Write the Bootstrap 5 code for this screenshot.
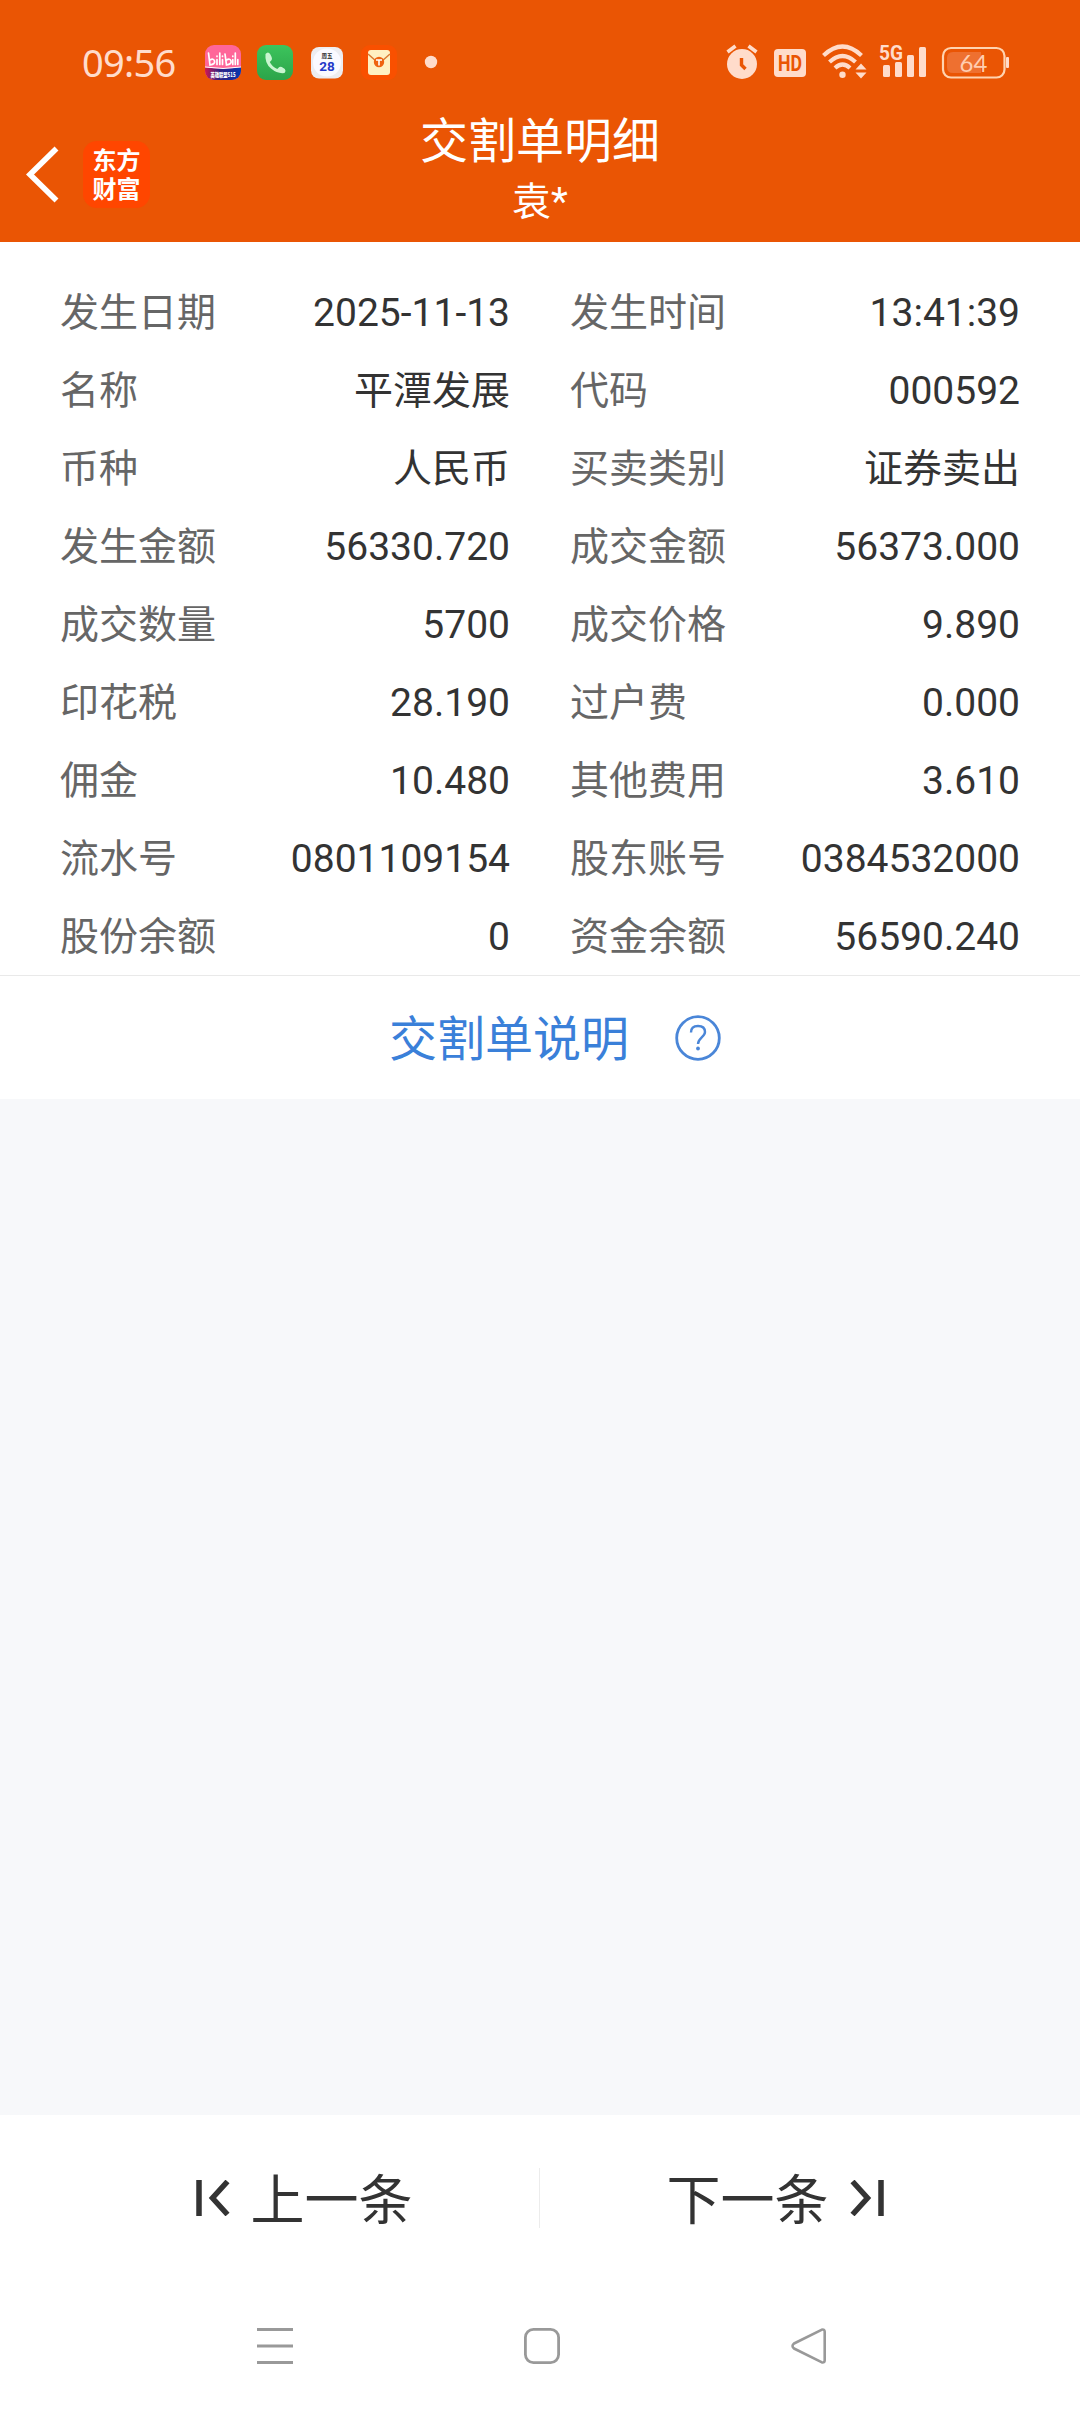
<!DOCTYPE html>
<html lang="zh-CN">
<head>
<meta charset="utf-8">
<meta name="viewport" content="width=device-width, initial-scale=1">
<title>交割单明细</title>
<link href="https://cdn.jsdelivr.net/npm/bootstrap@5.3.0/dist/css/bootstrap.min.css" rel="stylesheet">
<style>
body{font-family:Roboto,"Noto Sans CJK SC",sans-serif;color:#333;background:#f7f8fa;height:2412px;overflow:hidden}
.app-head{background:#ea5504;height:242px;color:#fff}
.status-bar{height:100px;padding:24px 71px 0 82px;color:#ffdccb}
.status-bar svg{display:block}
.clock{font:400 38px/76px "Noto Sans",sans-serif;width:123px;letter-spacing:-.7px}
.title-bar{display:grid;grid-template-columns:300px 1fr 300px;height:142px}
.title-left{padding:41px 0 0 26px;gap:24px}
.logo-tile{width:67px;height:67px;border-radius:14px;background:#ff4600;font:700 24px/29px "Noto Sans CJK SC",sans-serif;padding-top:3px}
.logo-tile span{display:block;height:29px}
.page-title{font-size:48px;line-height:60px;margin-top:12px}
.owner{font-size:39px;line-height:48px;margin-top:6px}
.detail-grid{display:grid;grid-template-columns:1fr 1fr;column-gap:60px;padding:32px 60px 0;height:733px;font-size:39px;grid-auto-rows:78px}
.detail-grid dt{font-weight:400;color:#666}
.explain{height:124px;border-top:1px solid #e9e9e9;color:#3a80d9;font-size:48px;padding-left:30px;gap:46px}
.explain span{padding-top:4px}
.pager{height:173px;font-size:54px}
.pager-item{gap:21px;width:539px}
.pager-item svg{margin-bottom:8px}
.pager-prev{padding-left:69px}
.pager-next{padding-right:69px}
.pager-rule{width:1px;height:60px;background:#ececec;margin-bottom:8px}
.sys-nav{height:124px;padding:40px 253px 0 257px}
</style>
</head>
<body class="d-flex flex-column">
<header class="app-head flex-shrink-0">
  <div class="status-bar d-flex align-items-start justify-content-between">
    <div class="d-flex">
      <span class="clock">09:56</span>
      <svg width="240" height="76" viewBox="205 24 240 76">
        <defs>
          <clipPath id="tile"><rect x="205" y="45" width="36" height="35" rx="9"/></clipPath>
          <linearGradient id="green" x2="0" y2="1"><stop stop-color="#3cc45c"/><stop offset="1" stop-color="#2ca44a"/></linearGradient>
          <linearGradient id="navy"><stop stop-color="#d01850"/><stop offset=".4" stop-color="#302080"/><stop offset="1" stop-color="#0838b0"/></linearGradient>
        </defs>
        <g clip-path="url(#tile)"><rect x="205" y="45" width="36" height="36" fill="#ff6699"/><path d="M205 67q18 3 36 0v14h-36z" fill="url(#navy)"/><path d="M205 67q18 3 36 0" stroke="#fff" fill="none"/></g>
        <g stroke="#fff" stroke-width="1.700" fill="none" stroke-linecap="round"><path d="M208.500 53l1.500 12q5.500-1 4.500-4t-4.500-1M217 59.500v5M217 56v.5M219.800 53v11.500M222.500 59.500v5M222.500 56v.5M225 54l1.500 11q5.500-1 4.500-4t-4.500-1M232.800 59.500v5M232.800 56v.5M235.300 53v11.500M237.800 59.500v5"/></g>
        <text x="223" y="76.500" text-anchor="middle" font-family="Noto Sans CJK SC" font-weight="900" font-size="6" textLength="25" lengthAdjust="spacingAndGlyphs" fill="#fff">英雄联盟S15</text>
        <rect x="257" y="45" width="36" height="35" rx="9" fill="url(#green)"/>
        <path d="M265.500 54q-1 9 5.500 14.500t13.500 4.500q2-2 .3-4l-3-2q-2-1-3.500 1l-1 1q-5-2-7.500-7l1.500-1.500q1.300-1.500.3-3.500l-1.500-3q-2-3-4.600 0z" fill="#c9f5d0"/>
        <rect x="311" y="47" width="32" height="31.500" rx="8" fill="#ededf0"/>
        <circle cx="327" cy="62.500" r="14" fill="#fafaff"/>
        <text x="327" y="57.500" text-anchor="middle" font-family="Noto Sans CJK SC" font-weight="700" font-size="5.500" fill="#333">周五</text>
        <text x="327" y="70.500" text-anchor="middle" font-family="Roboto" font-weight="700" font-size="13.500" fill="#2438c8">28</text>
        <rect x="361" y="45" width="36" height="35" rx="9" fill="#f95000"/>
        <rect x="368" y="50" width="22" height="25" rx="3" fill="#fff0c2"/>
        <path d="M368 54l8 7h6l8-7" stroke="#d97a33" stroke-width="1.500" fill="none"/><circle cx="379" cy="62" r="5.200" fill="#ef6310"/><path d="M376 60h6M379 60v5.500" stroke="#fff" stroke-width="1.600"/>
        <circle cx="431" cy="62" r="6.200" fill="#ffdccb"/>
      </svg>
    </div>
    <svg width="284" height="76" viewBox="725 24 284 76" fill="#ffdccb">
      <circle cx="742" cy="64" r="15"/>
      <path d="M727.500 52l8-6M756.500 52l-8-6" stroke="#ffdccb" stroke-width="3.600"/>
      <path d="M741.500 58v7l4 4" stroke="#ea5504" stroke-width="3.400" fill="none"/>
      <rect x="774" y="49" width="32" height="28" rx="4"/>
      <text x="790" y="71" text-anchor="middle" font-family="Roboto" font-weight="700" font-size="21.500" textLength="24" lengthAdjust="spacingAndGlyphs" fill="#ea5504">HD</text>
      <g fill="none" stroke="#ffdccb" stroke-width="4.200"><path d="M823.500 55.500q19-18 38 0M829.500 62q13-12 26 0M835 68q7.500-7 15 0"/></g>
      <circle cx="842.500" cy="74.800" r="3.200"/>
      <path d="M861 63.500l5.500 6h-11zM861 78.500l5.500-6h-11z"/>
      <text x="879" y="60" font-family="Roboto" font-weight="700" font-size="20.500" textLength="24" lengthAdjust="spacingAndGlyphs">5G</text>
      <rect x="883" y="65" width="7" height="12" rx="1.500"/><rect x="895" y="62" width="7" height="15" rx="1.500"/><rect x="907" y="55" width="7" height="22" rx="1.500"/><rect x="919" y="47" width="7" height="30" rx="1.500"/>
      <rect x="943" y="48" width="61.500" height="29.500" rx="8" fill="none" stroke="#ffd3b0" stroke-width="2.200"/>
      <path d="M953 52h28v21h-28q-6 0-6-6v-9q0-6 6-6z" fill="#ee7030"/><rect x="1006" y="57" width="3" height="11" rx="1"/>
      <text x="973.500" y="71.500" text-anchor="middle" font-family="Lato" font-size="24" fill="#ffcdb0">64</text>
    </svg>
  </div>
  <div class="title-bar">
    <div class="title-left d-flex align-items-start">
      <svg width="33" height="67" viewBox="26 141 33 67" fill="none" stroke="#fff" stroke-width="5.600"><path d="M56.500 148.500L30 174.500l26.500 26"/></svg>
      <div class="logo-tile text-center"><span>东方</span><span>财富</span></div>
    </div>
    <div class="text-center"><h1 class="page-title fw-normal mb-0">交割单明细</h1><div class="owner">袁*</div></div>
    <div></div>
  </div>
</header>
<main class="bg-white flex-shrink-0">
  <dl class="detail-grid mb-0">
    <div class="d-flex justify-content-between align-items-center"><dt>发生日期</dt><dd class="mb-0">2025-11-13</dd></div>
    <div class="d-flex justify-content-between align-items-center"><dt>发生时间</dt><dd class="mb-0">13:41:39</dd></div>
    <div class="d-flex justify-content-between align-items-center"><dt>名称</dt><dd class="mb-0">平潭发展</dd></div>
    <div class="d-flex justify-content-between align-items-center"><dt>代码</dt><dd class="mb-0">000592</dd></div>
    <div class="d-flex justify-content-between align-items-center"><dt>币种</dt><dd class="mb-0">人民币</dd></div>
    <div class="d-flex justify-content-between align-items-center"><dt>买卖类别</dt><dd class="mb-0">证券卖出</dd></div>
    <div class="d-flex justify-content-between align-items-center"><dt>发生金额</dt><dd class="mb-0">56330.720</dd></div>
    <div class="d-flex justify-content-between align-items-center"><dt>成交金额</dt><dd class="mb-0">56373.000</dd></div>
    <div class="d-flex justify-content-between align-items-center"><dt>成交数量</dt><dd class="mb-0">5700</dd></div>
    <div class="d-flex justify-content-between align-items-center"><dt>成交价格</dt><dd class="mb-0">9.890</dd></div>
    <div class="d-flex justify-content-between align-items-center"><dt>印花税</dt><dd class="mb-0">28.190</dd></div>
    <div class="d-flex justify-content-between align-items-center"><dt>过户费</dt><dd class="mb-0">0.000</dd></div>
    <div class="d-flex justify-content-between align-items-center"><dt>佣金</dt><dd class="mb-0">10.480</dd></div>
    <div class="d-flex justify-content-between align-items-center"><dt>其他费用</dt><dd class="mb-0">3.610</dd></div>
    <div class="d-flex justify-content-between align-items-center"><dt>流水号</dt><dd class="mb-0">0801109154</dd></div>
    <div class="d-flex justify-content-between align-items-center"><dt>股东账号</dt><dd class="mb-0">0384532000</dd></div>
    <div class="d-flex justify-content-between align-items-center"><dt>股份余额</dt><dd class="mb-0">0</dd></div>
    <div class="d-flex justify-content-between align-items-center"><dt>资金余额</dt><dd class="mb-0">56590.240</dd></div>
  </dl>
  <div class="explain d-flex justify-content-center align-items-center">
    <span>交割单说明</span>
    <svg width="46" height="46" viewBox="0 0 46 46" fill="none" stroke="#4a86d8"><circle cx="23" cy="23" r="21.300" stroke-width="2.800"/><path d="M16 17.500q0-6.500 7-6.500t7 6c0 5-7 6-7 12" stroke-width="2.400"/><circle cx="23" cy="33.500" r="1.900" fill="#4a86d8" stroke="none"/></svg>
  </div>
</main>
<footer class="bg-white mt-auto flex-shrink-0">
  <div class="pager d-flex align-items-center">
    <div class="pager-item pager-prev d-flex align-items-center justify-content-center">
      <svg width="34" height="36" viewBox="0 0 34 36" fill="none" stroke="#333" stroke-width="5.500"><path d="M3 0v36M31.500 1.500L16.500 18l15 16.500"/></svg><span>上一条</span>
    </div>
    <div class="pager-rule"></div>
    <div class="pager-item pager-next d-flex align-items-center justify-content-center">
      <span>下一条</span><svg width="34" height="36" viewBox="0 0 34 36" fill="none" stroke="#333" stroke-width="5.500"><path d="M31 0v36M2.500 1.500L17.500 18l-15 16.500"/></svg>
    </div>
  </div>
  <nav class="sys-nav d-flex justify-content-between align-items-start">
    <svg width="36" height="36" viewBox="0 0 36 36" stroke="#999" stroke-width="3"><path d="M0 1.500h36M0 18h36M0 34.500h36"/></svg>
    <svg width="36" height="36" viewBox="0 0 36 36" fill="none" stroke="#999" stroke-width="2.800"><rect x="1.400" y="1.400" width="33.200" height="33.200" rx="8"/></svg>
    <svg width="36" height="36" viewBox="0 0 36 36" fill="none" stroke="#999" stroke-width="2.600" stroke-linejoin="round"><path d="M3 15.500L30.500 1.800q3.200-1 3.200 2v28.400q0 3-3.200 2L3 20.500q-3-2.500 0-5z"/></svg>
  </nav>
</footer>
<script src="https://cdn.jsdelivr.net/npm/bootstrap@5.3.0/dist/js/bootstrap.bundle.min.js"></script>
</body>
</html>
